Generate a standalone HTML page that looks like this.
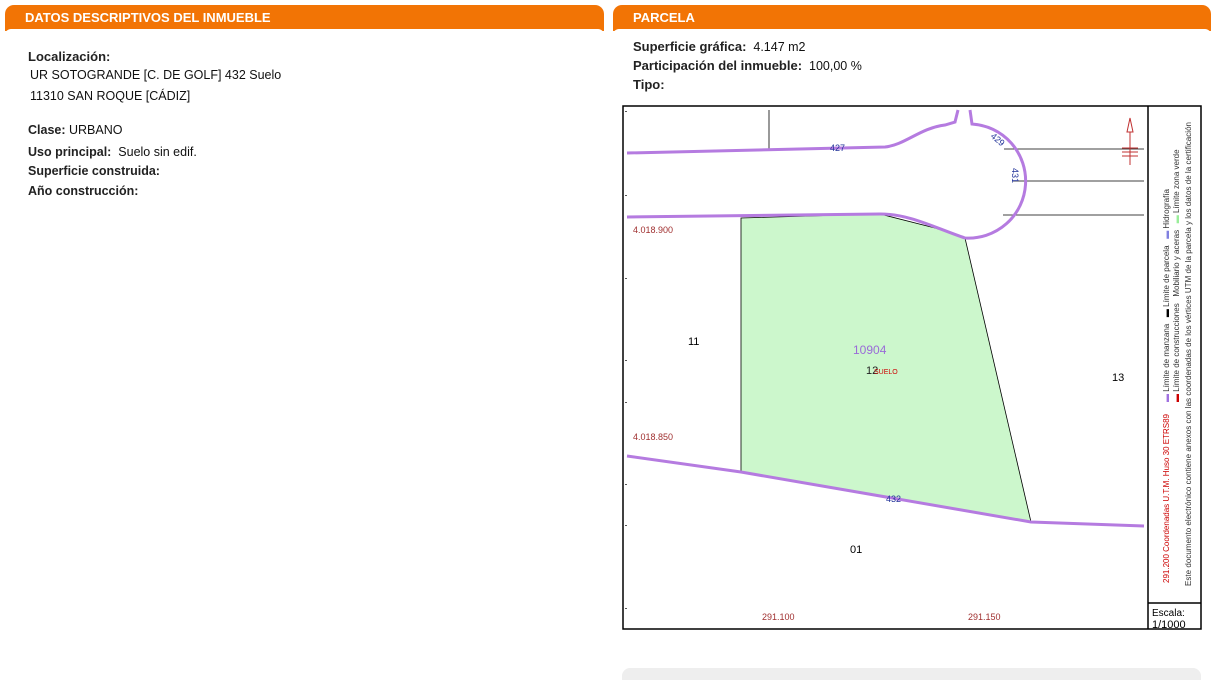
<!DOCTYPE html>
<html><head><meta charset="utf-8"><style>
body{margin:0;width:1226px;height:680px;background:#fff;position:relative;overflow:hidden;font-family:"Liberation Sans",sans-serif}
.hdr{position:absolute;top:5px;height:26px;background:#f27405;border-radius:9px 9px 0 0;color:#fff;font-weight:bold;font-size:13px;line-height:26px;padding-left:20px;box-sizing:border-box}
.hdr:after{content:"";position:absolute;left:0;right:0;bottom:-4px;height:6px;background:#fff;border-radius:8px 8px 0 0}
.t{position:absolute;font-size:12.5px;color:#111;white-space:nowrap}
.b{font-weight:bold;font-size:12.5px;color:#222}
</style></head><body>
<div class="hdr" style="left:5px;width:599px;">DATOS DESCRIPTIVOS DEL INMUEBLE</div>
<div class="hdr" style="left:613px;width:598px;">PARCELA</div>
<div class="t b" style="left:28px;top:49px;font-size:13px">Localización:</div>
<div class="t" style="left:30px;top:68px">UR SOTOGRANDE [C. DE GOLF] 432 Suelo</div>
<div class="t" style="left:30px;top:89px">11310 SAN ROQUE [CÁDIZ]</div>
<div class="t" style="left:28px;top:123px"><span class="b">Clase:</span> URBANO</div>
<div class="t" style="left:28px;top:145px"><span class="b">Uso principal:</span>&nbsp; Suelo sin edif.</div>
<div class="t b" style="left:28px;top:164px">Superficie construida:</div>
<div class="t b" style="left:28px;top:184px">Año construcción:</div>
<div class="t" style="left:633px;top:39px"><span class="b" style="font-size:13px">Superficie gráfica:</span>&nbsp; 4.147 m2</div>
<div class="t" style="left:633px;top:58px"><span class="b" style="font-size:13px">Participación del inmueble:</span>&nbsp; 100,00 %</div>
<div class="t b" style="left:633px;top:77px;font-size:13px">Tipo:</div>
<svg width="1226" height="680" style="position:absolute;left:0;top:0" font-family="Liberation Sans">
<rect x="623" y="106" width="578" height="523" fill="#fff" stroke="#000" stroke-width="1.5"/>
<line x1="1148" y1="106" x2="1148" y2="629" stroke="#000" stroke-width="1.5"/>
<line x1="1148" y1="603" x2="1201" y2="603" stroke="#000" stroke-width="1.5"/>
<polygon points="741,218 880,214 935,228 965,238 1031,522 741,472" fill="#ccf7cc" stroke="#000" stroke-width="0.8"/>
<g stroke="#000" stroke-width="0.8">
<line x1="769" y1="110" x2="769" y2="150"/>
<line x1="1004" y1="149" x2="1144" y2="149"/><line x1="1013" y1="181" x2="1144" y2="181"/><line x1="1003" y1="215" x2="1144" y2="215"/>
</g>
<g fill="none" stroke="#b57be0" stroke-width="3">
<path d="M627,153 L885,147 C905,145 920,128 945,125 L955,122 L958,110"/>
<path d="M970,110 L972,124 A56,56 0 1 1 965,238 C935,228 910,214 880,214 L627,217"/>
<path d="M627,456 L741,472 L1031,522 L1144,526"/>
</g>
<g font-size="9" fill="#223399">
<text x="830" y="151">427</text><text x="886" y="502">432</text>
<text x="990" y="137" transform="rotate(40 990 137)">429</text>
<text x="1012" y="168" transform="rotate(90 1012 168)">431</text>
</g>
<g font-size="9" fill="#a03030"><text x="633" y="233">4.018.900</text><text x="633" y="440">4.018.850</text>
<text x="762" y="620">291.100</text><text x="968" y="620">291.150</text></g>
<text x="688" y="345" font-size="11">11</text><text x="1112" y="381" font-size="11">13</text><text x="850" y="553" font-size="11">01</text>
<text x="853" y="354" font-size="12" fill="#9a6bd8">10904</text>
<text x="866" y="374" font-size="11" fill="#222">12</text><text x="874" y="374" font-size="7" fill="#c00">SUELO</text>
<path d="M1130,118 L1127,132 L1133,132 Z M1130,132 L1130,165 M1122,148 L1138,148 M1122,152 L1138,152 M1122,156 L1138,156" stroke="#c03030" fill="none" stroke-width="1"/>
<g font-size="8" fill="#333" transform="rotate(-90)">
<text x="-583" y="1169" fill="#c00">291.200 Coordenadas U.T.M. Huso 30 ETRS89</text>
<text x="-402" y="1169"><tspan fill="#a070e0">▬</tspan> Límite de manzana &#160; <tspan fill="#000">▬</tspan> Límite de parcela &#160; <tspan fill="#8080e0">▬</tspan> Hidrografía</text>
<text x="-402" y="1179"><tspan fill="#c00">▬</tspan> Límite de construcciones &#160; Mobiliario y aceras &#160; <tspan fill="#9e9">▬</tspan> Límite zona verde</text>
<text x="-586" y="1191" textLength="464">Este documento electrónico contiene anexos con las coordenadas de los vértices UTM de la parcela y los datos de la certificación</text>
</g>
<text x="1152" y="616" font-size="10">Escala:</text><text x="1152" y="628" font-size="11">1/1000</text>
<g fill="#555"><rect x="625" y="111" width="2" height="1"/><rect x="625" y="195" width="2" height="1"/><rect x="625" y="278" width="2" height="1"/><rect x="625" y="360" width="2" height="1"/><rect x="625" y="402" width="2" height="1"/><rect x="625" y="484" width="2" height="1"/><rect x="625" y="525" width="2" height="1"/><rect x="625" y="608" width="2" height="1"/></g>
<rect x="622" y="668" width="579" height="20" rx="8" fill="#eeeeee"/>
</svg>
</body></html>
